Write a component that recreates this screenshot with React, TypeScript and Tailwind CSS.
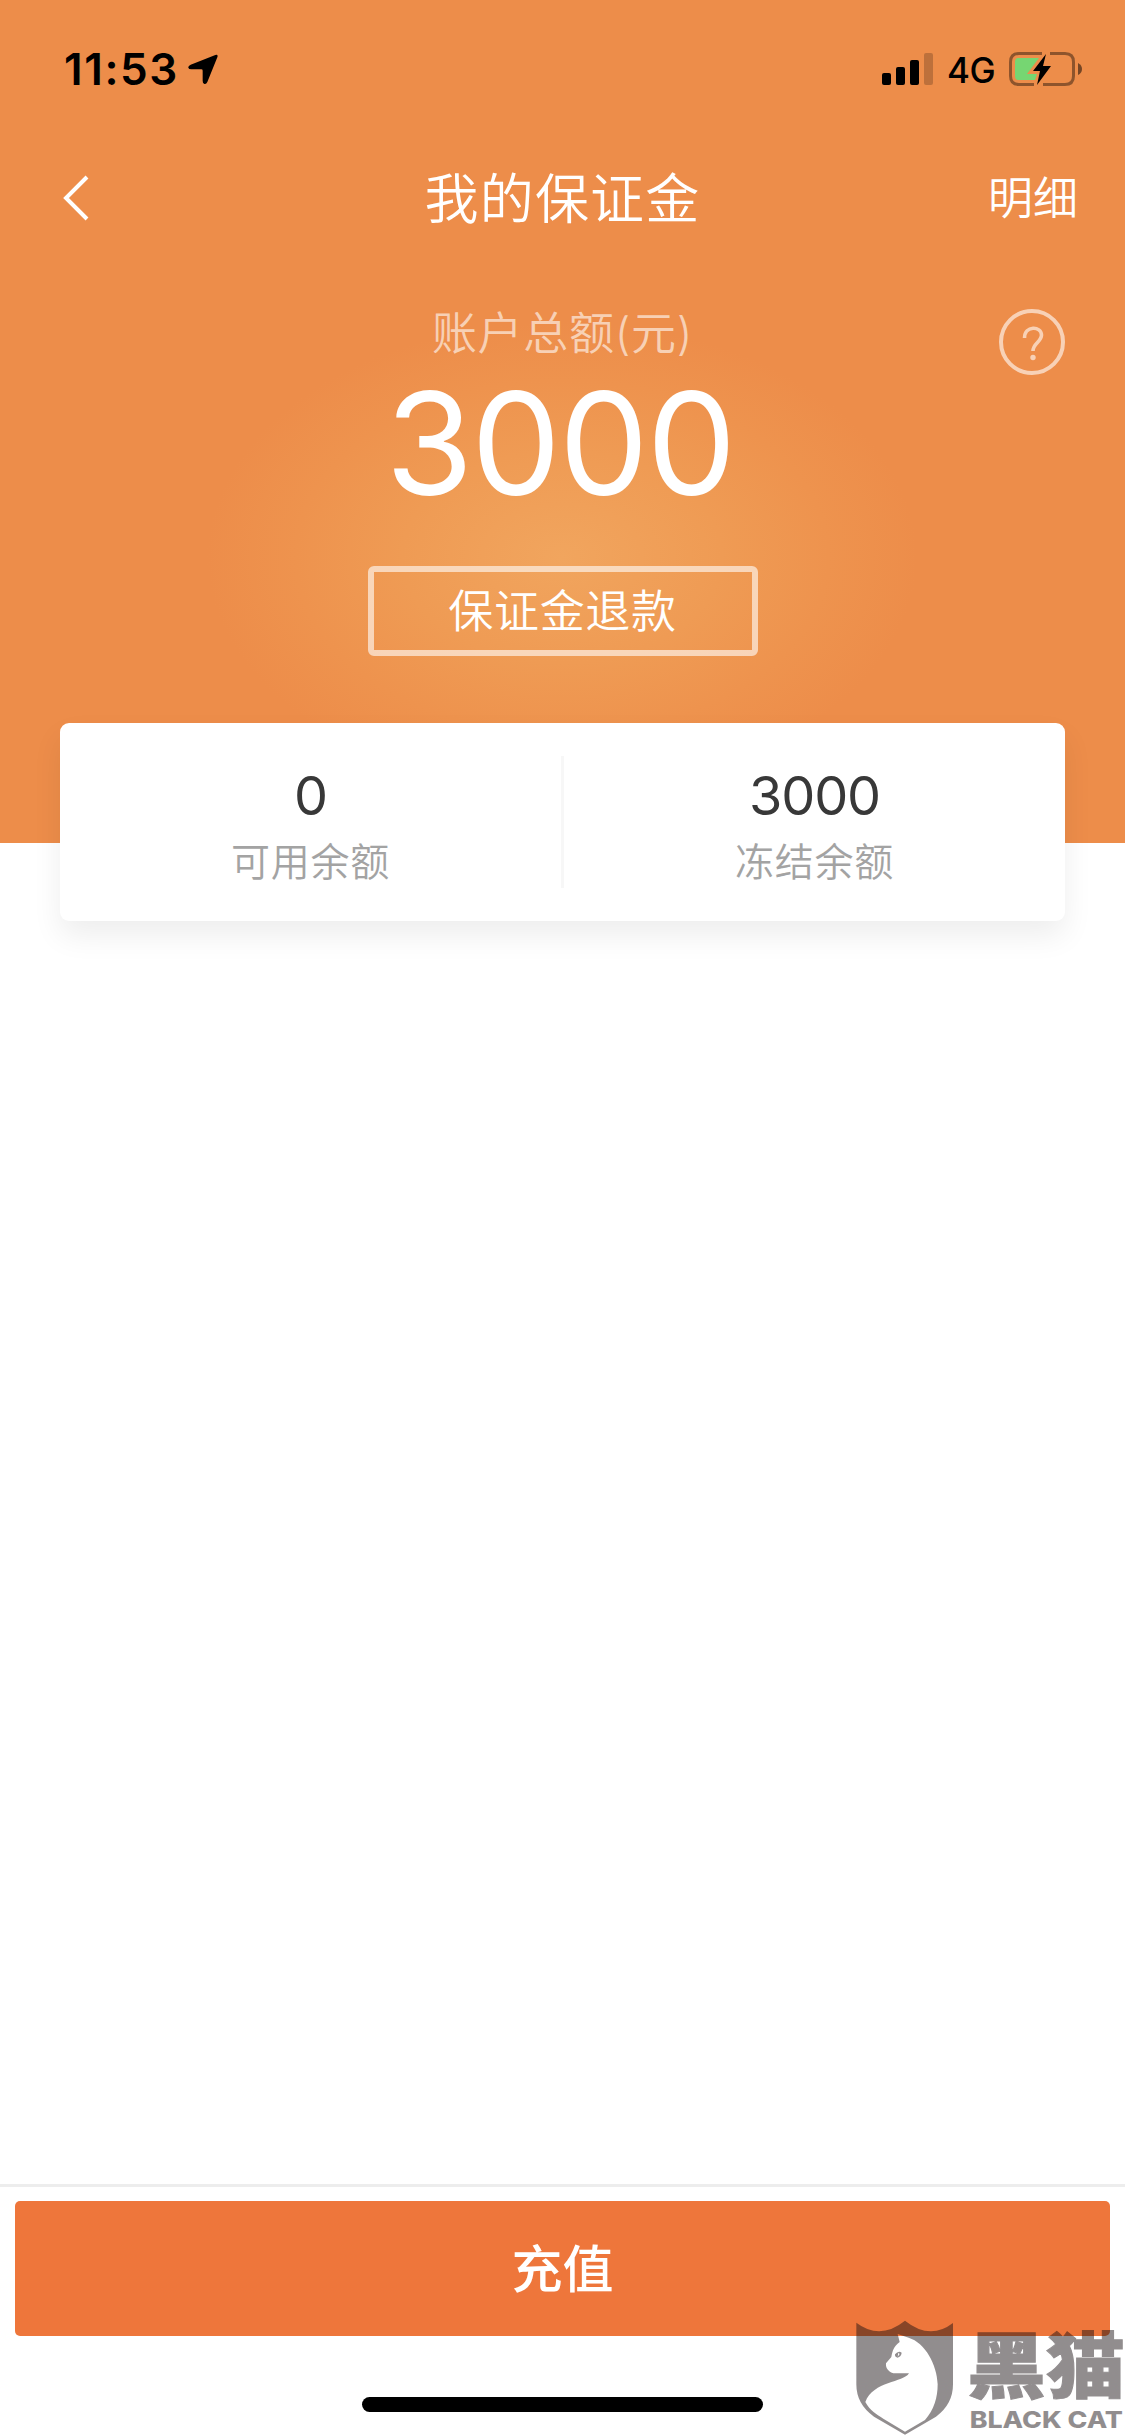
import React from 'react';

interface Balance {
  label: string;
  amount: string;
}

const balances: Balance[] = [
  { label: '可用余额', amount: '0' },
  { label: '冻结余额', amount: '3000' },
];

const StatusBar: React.FC = () => (
  <div className="flex h-[132px] items-start justify-between pl-[64px] pr-[43px] pt-[46px] text-black">
    <div className="flex h-[46px] items-center">
      <span className="w-[124px] whitespace-nowrap text-[44px] font-semibold leading-[46px] tracking-[1.6px]">11:53</span>
      <svg className="h-[30px] w-[30px]" viewBox="0 0 90 90">
        <path d="M82 3 Q91 0 88 10 L58 84 Q54 92 48 89 Q44 87 44 80 L44 50 Q44 46 40 46 L10 46 Q2 46 1 41 Q0 36 8 32 Z" fill="currentColor" />
      </svg>
    </div>
    <div className="flex h-[46px] items-center">
      <svg className="h-[32px] w-[51px]" viewBox="0 0 51 32">
        <rect x="0" y="20" width="9" height="12" rx="2" />
        <rect x="14" y="14" width="9" height="18" rx="2" />
        <rect x="28" y="7" width="9" height="25" rx="2" />
        <rect x="42" y="0" width="9" height="32" rx="2" opacity="0.2" />
      </svg>
      <span className="ml-[14px] w-[62px] whitespace-nowrap pt-[2px] text-[35px] font-medium leading-[40px] tracking-[-0.5px]">4G</span>
      <svg className="h-[38px] w-[73px]" viewBox="0 0 73 38">
        <path d="M33 3.5 H10 Q1.5 3.5 1.5 12 V26 Q1.5 34.5 10 34.5 H25 M41 3.5 H56 Q64.500 3.500 64.500 12 V26 Q64.500 34.500 56 34.500 H34" fill="none" stroke="#000" strokeOpacity="0.4" strokeWidth="3" />
        <path d="M69 13 Q73 15 73 19 Q73 23 69 25 Z" fillOpacity="0.5" />
        <path d="M9 8 H30 L18 24 H28 L26 30 H9 Q6 30 6 26 V12 Q6 8 9 8 Z" fill="#76d672" />
        <path d="M37 4 L24 21 H31 L28 35 L42 16 H34 Z" />
      </svg>
    </div>
  </div>
);

const NavBar: React.FC = () => (
  <div className="grid h-[132px] grid-cols-3 items-center pl-[63px] pr-[47px] text-white">
    <svg className="h-[46px] w-[27px]" viewBox="0 0 27 46" fill="none" stroke="currentColor" strokeWidth="4">
      <path d="M24 2 L3 23 L24 44" />
    </svg>
    <h1 className="-ml-[16px] whitespace-nowrap pt-[3px] text-center text-[54px] font-[350] leading-[60px] tracking-[1.2px]">我的保证金</h1>
    <a className="whitespace-nowrap pt-[2px] text-right text-[45px] font-[350] leading-[60px]">明细</a>
  </div>
);

const Watermark: React.FC = () => (
  <svg
    className="absolute bottom-0 right-0 h-[117px] w-[270px]"
    viewBox="75 89 810 351"
    fill="#180f12"
    opacity="0.47"
  >
    <path
      fillRule="evenodd"
      d="M79 100 Q150 154 225 94 Q300 154 369 101 V285 Q369 345 318 382 L225 436 L132 382 Q79 345 79 285 Z
         M203 134 L209 158 C190 172 188 185 184 203 L168 222 C166 238 178 249 190 252 L237 252 C220 280 130 275 106 338 C120 365 140 375 160 388 L225 427 L285 392 C312 362 323 325 323 285 C321 225 285 160 236 145 Z"
    />
    <path d="M195 195 Q205 183 215 190 Q214 202 202 205 Q194 203 195 195 Z M205 190 L203 202 L209 194 Z" fillRule="evenodd" />
    <text x="411" y="308" fontSize="214" fontWeight="900" textLength="474" lengthAdjust="spacingAndGlyphs" stroke="#180f12" strokeWidth="3">黑猫</text>
    <text x="419" y="416" fontSize="68" fontWeight="800" textLength="460" lengthAdjust="spacingAndGlyphs">BLACK CAT</text>
  </svg>
);

const App: React.FC = () => {
  return (
    <div className="relative flex h-[2436px] w-[1125px] flex-col overflow-hidden bg-white font-['Inter','Noto_Sans_CJK_SC',sans-serif]">
      <header className="h-[843px] shrink-0 bg-[#ed8d4a] bg-[radial-gradient(ellipse_355px_235px_at_562px_557px,#f1a55e_0%,#ef9b54_45%,#ee934e_75%,#ed8d4a_100%)]">
        <StatusBar />
        <NavBar />
        <div className="grid grid-cols-[1fr_auto_1fr] pt-[38px]">
          <div className="col-start-2 flex flex-col items-center">
            <p className="h-[60px] whitespace-nowrap pt-[2px] text-[45px] font-[350] leading-[60px] tracking-[0.7px] text-white/60">账户总额(元)</p>
            <p className="-ml-[5px] mt-[10px] h-[144px] text-[142px] leading-[143px] tracking-[-1.9px] text-white">3000</p>
            <button className="mt-[50px] h-[90px] w-[390px] rounded-md border-[6px] border-white/60 pt-[2px] text-[45px] font-[350] leading-[76px] tracking-[0.7px] text-white">
              保证金退款
            </button>
          </div>
          <svg className="mr-[60px] mt-[7px] h-[66px] w-[66px] justify-self-end text-white/60" viewBox="0 0 66 66" fill="none" stroke="currentColor">
            <circle cx="33" cy="33" r="31" strokeWidth="4" />
            <path d="M25.500 29 C25.500 16 42.500 17 42.500 26 C42.500 33 34 34 34 42" strokeWidth="3.600" />
            <circle cx="34" cy="48.500" r="2.700" fill="currentColor" stroke="none" />
          </svg>
        </div>
      </header>

      <section className="mx-[60px] -mt-[120px] flex h-[198px] shrink-0 items-center rounded-[9px] bg-white shadow-[0_15px_30px_rgba(0,0,0,0.07)]">
        {balances.map((item, i) => (
          <React.Fragment key={item.label}>
            {i > 0 && <div className="h-[132px] w-[3px] bg-[#f7f7f7]" />}
            <div className="flex flex-1 flex-col items-center pt-[11px]">
              <span className="h-[60px] text-[54px] leading-[60px] tracking-[-1.2px] text-[#383838]">{item.amount}</span>
              <span className="mt-[9px] h-[54px] text-[39px] font-[350] leading-[54px] tracking-[0.8px] text-[#a3a3a3]">{item.label}</span>
            </div>
          </React.Fragment>
        ))}
      </section>

      <footer className="mt-auto flex h-[252px] shrink-0 flex-col items-center border-t-[3px] border-[#ededed] px-[15px] pt-[14px]">
        <button className="h-[135px] w-full rounded-[5px] bg-[#ee763b] pt-[3px] text-[51px] font-medium text-white">充值</button>
        <div className="mt-[61px] h-[15px] w-[401px] rounded-full bg-black" />
      </footer>

      <Watermark />
    </div>
  );
};

export default App;
